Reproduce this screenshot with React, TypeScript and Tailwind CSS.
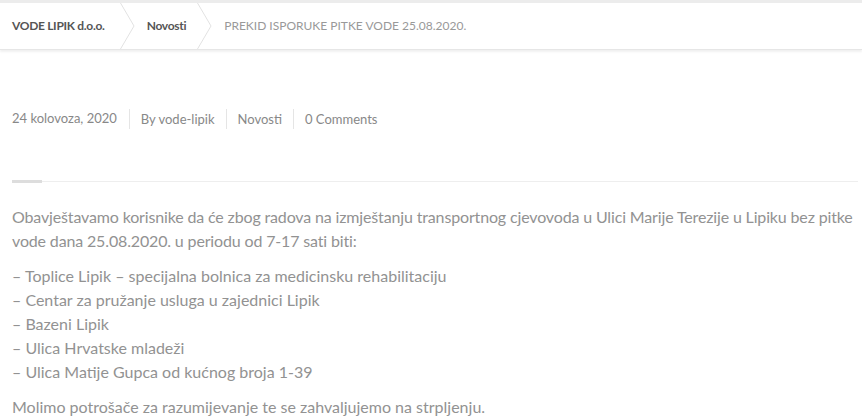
import React from "react";

function Chevron() {
  return (
    <svg width="15" height="46" viewBox="0 0 15 46" className="shrink-0">
      <polyline points="0.5,0 14,23 0.5,46" fill="none" stroke="#e2e2e2" strokeWidth="1" />
    </svg>
  );
}

function Breadcrumb() {
  return (
    <div className="border-t-[3px] border-[#ececec] bg-white shadow-[0_2px_2px_rgba(0,0,0,0.06)] border-b border-b-[#e6e6e6]">
      <nav className="flex items-center h-[46px] pl-3 text-[12px]">
        <span className="font-bold text-[#555] tracking-[-0.3px]">VODE LIPIK d.o.o.</span>
        <span className="ml-[15px] mr-[12px] flex"><Chevron /></span>
        <span className="font-bold text-[#555] tracking-[-0.3px]">Novosti</span>
        <span className="ml-[11px] mr-[12px] flex"><Chevron /></span>
        <span className="text-[#999]">PREKID ISPORUKE PITKE VODE 25.08.2020.</span>
      </nav>
    </div>
  );
}

function Meta() {
  const items = ["24 kolovoza, 2020", "By vode-lipik", "Novosti", "0 Comments"];
  return (
    <div className="flex items-center text-[13px] text-[#888]">
      {items.map((t, i) => (
        <span
          key={t}
          className={i === 0 ? "pr-3" : "border-l border-[#e5e5e5] px-[11px] leading-5"}
        >
          {t}
        </span>
      ))}
    </div>
  );
}

export default function App() {
  return (
    <div className="bg-white h-[417px] overflow-hidden" style={{ fontFamily: "Lato, sans-serif" }}>
      <Breadcrumb />
      <div className="pl-3 pr-1">
        <div className="pt-[59px]">
          <Meta />
        </div>
        <div className="mt-[51px] relative h-[3px]">
          <div className="absolute left-0 right-0 top-[1px] h-px bg-[#eeeeee]" />
          <div className="absolute left-0 top-0 h-[3px] w-[30px] bg-[#dddddd]" />
        </div>
        <div className="mt-[22px] text-[16px] leading-6 text-[#929292]">
          <p className="mb-[11px] tracking-[-0.15px]">
            Obavještavamo korisnike da će zbog radova na izmještanju transportnog cjevovoda u Ulici Marije Terezije u Lipiku bez pitke vode dana 25.08.2020. u periodu od 7-17 sati biti:
          </p>
          <p className="mb-[11px]">
            – Toplice Lipik – specijalna bolnica za medicinsku rehabilitaciju
            <br />– Centar za pružanje usluga u zajednici Lipik
            <br />– Bazeni Lipik
            <br />– Ulica Hrvatske mladeži
            <br />– Ulica Matije Gupca od kućnog broja 1-39
          </p>
          <p>Molimo potrošače za razumijevanje te se zahvaljujemo na strpljenju.</p>
        </div>
      </div>
    </div>
  );
}
